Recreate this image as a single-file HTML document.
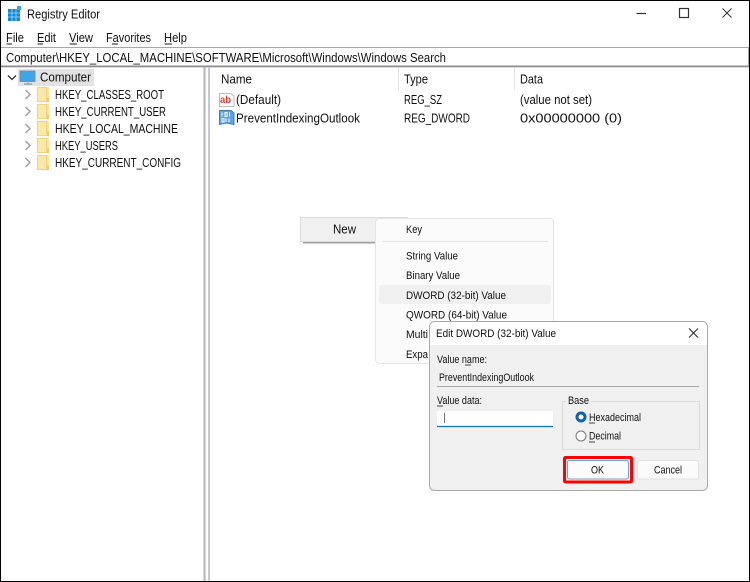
<!DOCTYPE html>
<html lang="en"><head><meta charset="utf-8"><title>Registry Editor</title>
<style>
html,body{margin:0;padding:0;background:#fff;width:750px;height:582px;overflow:hidden}
svg{display:block}
text{font-family:"Liberation Sans",sans-serif;fill:#111;font-size:12.6px}
.s{font-size:11.400px}
.d{font-size:10.800px}
</style></head><body>
<svg width="750" height="582" viewBox="0 0 750 582" xmlns="http://www.w3.org/2000/svg">
<defs>
<g id="folder"><rect x="0" y="0" width="12" height="15" fill="#fde59e"/><path d="M0.500 0.500H9.500V11H11.500V14.500H0.500Z" fill="#fde8a6" stroke="#f3d27c" stroke-width="1"/><path d="M9.500 11H12V15H9.500Z" fill="#f2c860"/></g>
<path id="chev" d="M0 0L4.500 4.500L0 9" fill="none" stroke="#a2a2a2" stroke-width="1.500"/>
</defs>
<rect width="750" height="582" fill="#fff"/>

<!-- app icon -->
<rect x="8" y="9" width="12" height="12" fill="#1b86d0"/>
<path d="M12 9V21M16 9V21M8 13H20M8 17H20" stroke="#a9d6f2" stroke-width="0.800"/>
<rect x="17" y="6" width="4" height="4" fill="#3aa6de"/>
<text x="27" y="18.500" textLength="73" lengthAdjust="spacingAndGlyphs">Registry Editor</text>

<!-- window controls -->
<path d="M636.500 13.500H646" stroke="#333" stroke-width="1.200"/>
<rect x="679.500" y="8.500" width="9" height="9" fill="none" stroke="#333" stroke-width="1.200"/>
<path d="M722.500 8.500L731.500 17.500M731.500 8.500L722.500 17.500" stroke="#333" stroke-width="1"/>

<!-- menu -->
<text x="6" y="42" textLength="18" lengthAdjust="spacingAndGlyphs">File</text>
<text x="37" y="42" textLength="19" lengthAdjust="spacingAndGlyphs">Edit</text>
<text x="69" y="42" textLength="24" lengthAdjust="spacingAndGlyphs">View</text>
<text x="106" y="42" textLength="45" lengthAdjust="spacingAndGlyphs">Favorites</text>
<text x="164" y="42" textLength="23" lengthAdjust="spacingAndGlyphs">Help</text>
<path d="M6.500 44H12M37.500 44H43M69.500 44H77M112 44H118M164.500 44H172" stroke="#1a1a1a" stroke-width="1"/>

<!-- address bar -->
<path d="M0 47.500H750" stroke="#a8a8a8" stroke-width="1"/>
<path d="M748.500 47.500V66" stroke="#a8a8a8" stroke-width="1"/>
<rect x="0" y="65.500" width="750" height="1.800" fill="#8e8e8e"/>
<text x="6" y="62" textLength="440" lengthAdjust="spacingAndGlyphs">Computer\HKEY_LOCAL_MACHINE\SOFTWARE\Microsoft\Windows\Windows Search</text>

<!-- splitter -->
<rect x="203.500" y="67" width="2" height="514" fill="#b2b4bb"/>
<rect x="208" y="67" width="2" height="514" fill="#c6cace"/>

<!-- tree -->
<rect x="18" y="69" width="76" height="17" fill="#e2e2e2"/>
<path d="M8 75.500L12 79.500L16 75.500" fill="none" stroke="#333" stroke-width="1.300"/>
<rect x="20" y="71" width="15" height="10.500" fill="#3fa5e6" stroke="#71899b" stroke-width="0.800"/>
<path d="M24 84H32" stroke="#8fa8ba" stroke-width="1.500"/><path d="M28 81V84" stroke="#9ab" stroke-width="1"/>
<text x="40" y="81.500" textLength="51" lengthAdjust="spacingAndGlyphs">Computer</text>

<use href="#chev" x="25.500" y="90"/><use href="#folder" x="37" y="87"/>
<use href="#chev" x="25.500" y="107"/><use href="#folder" x="37" y="104"/>
<use href="#chev" x="25.500" y="124"/><use href="#folder" x="37" y="121"/>
<use href="#chev" x="25.500" y="141"/><use href="#folder" x="37" y="138"/>
<use href="#chev" x="25.500" y="158"/><use href="#folder" x="37" y="155"/>
<text x="55" y="99" textLength="109" lengthAdjust="spacingAndGlyphs">HKEY_CLASSES_ROOT</text>
<text x="55" y="116" textLength="111" lengthAdjust="spacingAndGlyphs">HKEY_CURRENT_USER</text>
<text x="55" y="133" textLength="123" lengthAdjust="spacingAndGlyphs">HKEY_LOCAL_MACHINE</text>
<text x="55" y="150" textLength="63" lengthAdjust="spacingAndGlyphs">HKEY_USERS</text>
<text x="55" y="167" textLength="126" lengthAdjust="spacingAndGlyphs">HKEY_CURRENT_CONFIG</text>

<!-- list header -->
<path d="M398.500 68V90M514.500 68V90" stroke="#e5e5e5" stroke-width="1"/>
<text x="221" y="83.500" textLength="31" lengthAdjust="spacingAndGlyphs">Name</text>
<text x="404" y="83.500" textLength="24" lengthAdjust="spacingAndGlyphs">Type</text>
<text x="520" y="83.500" textLength="23" lengthAdjust="spacingAndGlyphs">Data</text>

<!-- rows -->
<path d="M219.500 93.500H231L234 96V106.500H219.500Z" fill="#fff" stroke="#bbb" stroke-width="1"/>
<text x="220" y="103" style="font-size:10px;font-weight:bold;fill:#d8452e" textLength="11" lengthAdjust="spacingAndGlyphs">ab</text>
<path d="M219.500 110.500H231L234 113V124.500L226 123L219.500 124.500Z" fill="#5da4e6" stroke="#3f7fc0" stroke-width="1"/>
<path d="M222 112.500V116.500M225 112.500H227V116.500H225ZM229.500 112.500V116.500M222 118.500H224V122H222ZM226 118.500V122M229 118.500V122" fill="none" stroke="#fff" stroke-width="1"/>
<text x="236" y="104" textLength="45" lengthAdjust="spacingAndGlyphs">(Default)</text>
<text x="404" y="104" textLength="38" lengthAdjust="spacingAndGlyphs">REG_SZ</text>
<text x="520" y="104" textLength="72" lengthAdjust="spacingAndGlyphs">(value not set)</text>
<text x="236" y="122.500" textLength="124" lengthAdjust="spacingAndGlyphs">PreventIndexingOutlook</text>
<text x="404" y="122.500" textLength="66" lengthAdjust="spacingAndGlyphs">REG_DWORD</text>
<text x="520" y="122.500" textLength="102" lengthAdjust="spacingAndGlyphs">0x00000000 (0)</text>

<!-- New menu -->
<rect x="303" y="240" width="105" height="3.500" fill="#a0a0a0"/>
<rect x="300.500" y="217.500" width="107" height="24" fill="#f0f0f0" stroke="#dcdcdc" stroke-width="1"/>
<text x="333" y="233.500" textLength="23" lengthAdjust="spacingAndGlyphs">New</text>

<!-- submenu -->
<rect x="375.500" y="218.500" width="178" height="145" rx="4" fill="#fbfbfb" stroke="#e4e4e4" stroke-width="1"/>
<path d="M382 241.500H548" stroke="#e4e4e4" stroke-width="1"/>
<rect x="379" y="285" width="172" height="19" rx="3" fill="#f0f0f0"/>
<text x="406" y="233" class="s" textLength="16" lengthAdjust="spacingAndGlyphs">Key</text>
<text x="406" y="259.500" class="s" textLength="52" lengthAdjust="spacingAndGlyphs">String Value</text>
<text x="406" y="279" class="s" textLength="54" lengthAdjust="spacingAndGlyphs">Binary Value</text>
<text x="406" y="299" class="s" textLength="100" lengthAdjust="spacingAndGlyphs">DWORD (32-bit) Value</text>
<text x="406" y="318.500" class="s" textLength="101" lengthAdjust="spacingAndGlyphs">QWORD (64-bit) Value</text>
<text x="406" y="338" class="s" textLength="22" lengthAdjust="spacingAndGlyphs">Multi</text>
<text x="406" y="358" class="s" textLength="22" lengthAdjust="spacingAndGlyphs">Expa</text>

<!-- dialog -->
<rect x="429.500" y="321.500" width="278" height="169" rx="5" fill="#f0f0f0" stroke="#a9a9a9" stroke-width="1"/>
<path d="M430 345V326.500A4.500 4.500 0 0 1 434.500 322H702.500A4.500 4.500 0 0 1 707 326.500V345Z" fill="#fff"/>
<text x="436" y="337" class="s" textLength="120" lengthAdjust="spacingAndGlyphs">Edit DWORD (32-bit) Value</text>
<path d="M689 328.500L698 337.500M698 328.500L689 337.500" stroke="#222" stroke-width="1"/>

<text x="437" y="363" class="d" textLength="50" lengthAdjust="spacingAndGlyphs">Value name:</text>
<path d="M465 365H471" stroke="#1a1a1a" stroke-width="0.800"/>
<text x="439" y="381" class="d" textLength="95" lengthAdjust="spacingAndGlyphs">PreventIndexingOutlook</text>
<path d="M437 386.500H699" stroke="#a8a8a8" stroke-width="1"/>

<text x="437" y="404" class="d" textLength="45" lengthAdjust="spacingAndGlyphs">Value data:</text>
<path d="M437 406H443" stroke="#1a1a1a" stroke-width="0.800"/>
<rect x="437" y="411" width="116" height="16" fill="#fff"/>
<path d="M437 426.500H553" stroke="#1c6bb5" stroke-width="1.200"/>
<path d="M444.500 413V423" stroke="#777" stroke-width="1"/>

<rect x="562.500" y="401.500" width="137" height="48" fill="none" stroke="#dcdcdc" stroke-width="1"/>
<rect x="566" y="398" width="25" height="8" fill="#f0f0f0"/>
<text x="568" y="404" class="d" textLength="21" lengthAdjust="spacingAndGlyphs">Base</text>

<circle cx="581" cy="417" r="5.500" fill="#0f62b0"/><circle cx="581" cy="417" r="2.500" fill="#fff"/>
<text x="589" y="420.800" class="d" textLength="52" lengthAdjust="spacingAndGlyphs">Hexadecimal</text>
<path d="M589 423H595" stroke="#1a1a1a" stroke-width="0.800"/>
<circle cx="581" cy="436" r="5" fill="#f8f8f8" stroke="#777" stroke-width="1"/>
<text x="589" y="439.500" class="d" textLength="32" lengthAdjust="spacingAndGlyphs">Decimal</text>
<path d="M589 442H595" stroke="#1a1a1a" stroke-width="0.800"/>

<rect x="564.500" y="457.500" width="67" height="24.500" rx="1" fill="none" stroke="#f00" stroke-width="3"/>
<rect x="567.500" y="460.500" width="61" height="18.500" rx="2" fill="#fbfbfb" stroke="#6aa5d8" stroke-width="1"/>
<text x="591" y="473.500" class="d" textLength="13" lengthAdjust="spacingAndGlyphs">OK</text>
<rect x="637.500" y="460.500" width="61" height="18.500" rx="2" fill="#fbfbfb" stroke="#e0e0e0" stroke-width="1"/>
<text x="654" y="473.500" class="d" textLength="28" lengthAdjust="spacingAndGlyphs">Cancel</text>

<!-- outer border -->
<rect x="0.500" y="0.500" width="749" height="581" fill="none" stroke="#000" stroke-width="1"/>
</svg>
</body></html>
